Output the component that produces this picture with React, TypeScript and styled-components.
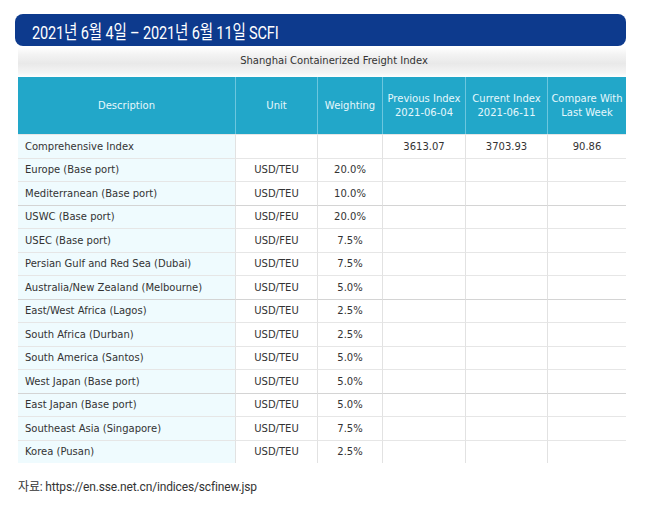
import React from 'react';
import styled, { createGlobalStyle } from 'styled-components';

const GlobalStyle = createGlobalStyle`
  html, body {
    margin: 0;
    padding: 0;
    background: #ffffff;
  }
`;

type RowType = {
  name: string;
  unit?: string;
  weight?: string;
  prev?: string;
  cur?: string;
  diff?: string;
  strong?: boolean;
};

const rows: RowType[] = [
  { name: 'Comprehensive Index', prev: '3613.07', cur: '3703.93', diff: '90.86' },
  { name: 'Europe (Base port)', unit: 'USD/TEU', weight: '20.0%' },
  { name: 'Mediterranean (Base port)', unit: 'USD/TEU', weight: '10.0%' },
  { name: 'USWC (Base port)', unit: 'USD/FEU', weight: '20.0%', strong: true },
  { name: 'USEC (Base port)', unit: 'USD/FEU', weight: '7.5%' },
  { name: 'Persian Gulf and Red Sea (Dubai)', unit: 'USD/TEU', weight: '7.5%' },
  { name: 'Australia/New Zealand (Melbourne)', unit: 'USD/TEU', weight: '5.0%' },
  { name: 'East/West Africa (Lagos)', unit: 'USD/TEU', weight: '2.5%', strong: true },
  { name: 'South Africa (Durban)', unit: 'USD/TEU', weight: '2.5%' },
  { name: 'South America (Santos)', unit: 'USD/TEU', weight: '5.0%' },
  { name: 'West Japan (Base port)', unit: 'USD/TEU', weight: '5.0%' },
  { name: 'East Japan (Base port)', unit: 'USD/TEU', weight: '5.0%', strong: true },
  { name: 'Southeast Asia (Singapore)', unit: 'USD/TEU', weight: '7.5%' },
  { name: 'Korea (Pusan)', unit: 'USD/TEU', weight: '2.5%' },
];

const Page = styled.div`
  width: 647px;
  height: 516px;
  padding: 14px 21px 0 15px;
  box-sizing: border-box;
  display: flex;
  flex-direction: column;
`;

const TitleBar = styled.div`
  height: 32px;
  background: #0d3a8d;
  border-radius: 8px;
  display: flex;
  align-items: center;
  padding: 1px 0 0 17px;
  box-sizing: border-box;
  overflow: hidden;
`;

// the title face in the picture is a tall, narrow gothic
const TitleText = styled.span`
  display: inline-block;
  white-space: nowrap;
  color: #ffffff;
  font-family: 'Roboto', 'Noto Sans CJK KR', sans-serif;
  font-size: 19px;
  letter-spacing: -0.2px;
  transform: scaleX(0.765);
  transform-origin: left center;
`;

const Sheet = styled.div`
  margin: 1px 0 0 3px;
  display: flex;
  flex-direction: column;
  font-family: 'DejaVu Sans', Verdana, sans-serif;
`;

const Caption = styled.div`
  height: 30px;
  display: flex;
  align-items: center;
  justify-content: center;
  padding: 0 0 4px 24px;
  box-sizing: border-box;
  font-size: 10px;
  color: #333333;
  background: linear-gradient(
    to bottom,
    #ffffff 0%,
    #f3f3f3 25%,
    #e9e9e9 55%,
    #f4f4f4 85%,
    #ffffff 100%
  );
`;

const Grid = styled.div`
  display: grid;
  grid-template-columns: 217px 82px 65px 83px 82px 79px;
`;

const HeadCell = styled.div`
  height: 57px;
  background: #22a7c9;
  color: #e6f7fc;
  font-size: 10px;
  line-height: 14px;
  display: flex;
  align-items: center;
  justify-content: center;
  text-align: center;
  white-space: pre-line;
  border-left: 1px solid #6cc6de;
  &:first-child {
    border-left: none;
  }
`;

const Cell = styled.div<{ $first?: boolean; $strong?: boolean }>`
  height: 23.5px;
  box-sizing: border-box;
  display: flex;
  align-items: center;
  justify-content: ${(p) => (p.$first ? 'flex-start' : 'center')};
  padding-left: ${(p) => (p.$first ? '7px' : '0')};
  background: ${(p) => (p.$first ? '#effbfe' : '#ffffff')};
  border-top: 1px solid ${(p) => (p.$strong ? '#d4d4d4' : '#e6e6e6')};
  border-left: ${(p) => (p.$first ? 'none' : '1px solid #e2e2e2')};
  font-size: 10px;
  color: #333333;
  white-space: nowrap;
`;

const Source = styled.div`
  margin: 14px 0 0 3px;
  font-family: 'Roboto', 'Noto Sans CJK KR', sans-serif;
  font-size: 12px;
  letter-spacing: -0.15px;
  color: #333333;
`;

const headers = [
  'Description',
  'Unit',
  'Weighting',
  'Previous Index\n2021-06-04',
  'Current Index\n2021-06-11',
  'Compare With\nLast Week',
];

export default function App() {
  return (
    <>
      <GlobalStyle />
      <Page>
        <TitleBar>
          <TitleText>2021년 6월 4일 – 2021년 6월 11일 SCFI</TitleText>
        </TitleBar>
        <Sheet>
          <Caption>Shanghai Containerized Freight Index</Caption>
          <Grid>
            {headers.map((h) => (
              <HeadCell key={h}>{h}</HeadCell>
            ))}
            {rows.map((r) => (
              <React.Fragment key={r.name}>
                <Cell $first $strong={r.strong}>{r.name}</Cell>
                <Cell $strong={r.strong}>{r.unit}</Cell>
                <Cell $strong={r.strong}>{r.weight}</Cell>
                <Cell $strong={r.strong}>{r.prev}</Cell>
                <Cell $strong={r.strong}>{r.cur}</Cell>
                <Cell $strong={r.strong}>{r.diff}</Cell>
              </React.Fragment>
            ))}
          </Grid>
        </Sheet>
        <Source>자료: https://en.sse.net.cn/indices/scfinew.jsp</Source>
      </Page>
    </>
  );
}
